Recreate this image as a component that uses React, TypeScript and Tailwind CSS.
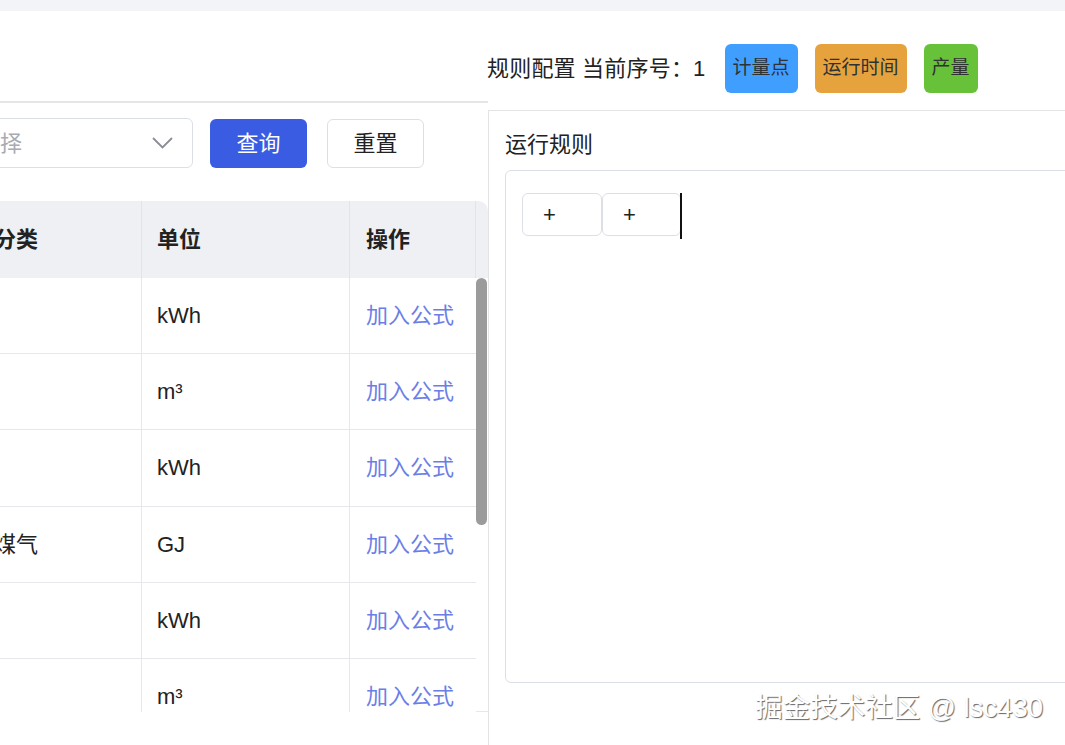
import React from 'react'

interface Row {
  category: string
  unit: string
}

const rows: Row[] = [
  { category: '电', unit: 'kWh' },
  { category: '水', unit: 'm³' },
  { category: '电', unit: 'kWh' },
  { category: '焦炉煤气', unit: 'GJ' },
  { category: '电', unit: 'kWh' },
  { category: '水', unit: 'm³' },
]

const font = { fontFamily: '"Liberation Sans", "Noto Sans CJK SC", sans-serif' }

function FilterBar() {
  return (
    <div className="-ml-[59px] flex items-center pt-[15px]">
      <div className="flex h-[50px] w-[252px] shrink-0 items-center justify-between rounded-[6px] border border-[#dcdfe6] pl-[14px] pr-[19px]">
        <span className="text-[22px] text-[#a8abb2]">请选择</span>
        <svg width="21" height="12" viewBox="0 0 21 12" fill="none">
          <path d="M1 1l9.5 9.5L20 1" stroke="#8a8d93" strokeWidth="1.8" />
        </svg>
      </div>
      <button className="ml-[17px] h-[49px] w-[97px] shrink-0 rounded-[6px] bg-[#3a5ce3] text-[22px] text-white">
        查询
      </button>
      <button className="ml-[20px] h-[49px] w-[97px] shrink-0 rounded-[6px] border border-[#dcdfe6] bg-white text-[22px] text-[#222]">
        重置
      </button>
    </div>
  )
}

function DataTable() {
  return (
    <div className="-ml-[65px] mt-[33px] flex flex-col">
      {/* Header */}
      <div className="flex h-[77px] rounded-tr-[10px] bg-[#eef0f3] text-[22px] font-bold text-[#222]">
        <div className="flex w-[207px] shrink-0 items-center border-r border-[#e2e4e8] pl-[15px]">能源分类</div>
        <div className="flex w-[208px] shrink-0 items-center border-r border-[#e2e4e8] pl-[15px]">单位</div>
        <div className="flex w-[126px] shrink-0 items-center border-r border-[#e2e4e8] pl-[16px]">操作</div>
        <div className="w-[12px] shrink-0" />
      </div>

      {/* Body */}
      <div className="flex h-[434px] overflow-hidden">
        <div className="flex w-[541px] shrink-0 flex-col">
          {rows.map((row, i) => (
            <div key={i} className="flex h-[76.2px] shrink-0 border-b border-[#e6e7ea] text-[22px] text-[#222]">
              <div className="flex w-[207px] shrink-0 items-center border-r border-[#e6e7ea] pl-[15px]">{row.category}</div>
              <div className="flex w-[208px] shrink-0 items-center border-r border-[#e6e7ea] pl-[15px]">{row.unit}</div>
              <div className="flex w-[126px] shrink-0 items-center pl-[16px] text-[#6b7ee6]">加入公式</div>
            </div>
          ))}
        </div>
        <div className="flex w-[12px] shrink-0 flex-col justify-between border-b border-[#e6e7ea]">
          <div className="h-[247px] w-[11px] rounded-full bg-[#9b9b9b]" />
        </div>
      </div>
    </div>
  )
}

function RulePanel() {
  return (
    <div className="flex min-w-0 flex-1 flex-col">
      {/* Title + token badges */}
      <div className="-ml-px flex h-[99px] shrink-0 items-start pt-[33px]">
        <div className="flex h-[49px] items-center text-[22px] tracking-[0.2px] text-[#222]">规则配置 当前序号：1</div>
        <span className="ml-[19px] flex h-[49px] items-center rounded-[6px] bg-[#409eff] px-[8px] text-[19px] text-[#303133]">计量点</span>
        <span className="ml-[17px] flex h-[49px] items-center rounded-[6px] bg-[#e6a23c] px-[8px] text-[19px] text-[#303133]">运行时间</span>
        <span className="ml-[17px] flex h-[49px] items-center rounded-[6px] bg-[#67c23a] px-[8px] text-[19px] text-[#303133]">产量</span>
      </div>

      {/* Rule box */}
      <div className="flex flex-1 flex-col border-l border-t border-[#e4e4e6] pl-[16px] pt-[19px]">
        <div className="text-[22px] leading-[30px] text-[#222]">运行规则</div>
        <div className="-mr-[40px] mt-[10px] flex h-[513px] items-start rounded-[6px] border border-[#dcdfe6] pl-[16px] pt-[22px]">
          <div className="flex h-[43px] w-[80px] items-center rounded-[6px] border border-[#dcdfe6] pl-[20px] text-[22px] text-[#222]">+</div>
          <div className="flex h-[43px] w-[79px] items-center rounded-[6px] border border-[#dcdfe6] pl-[20px] text-[22px] text-[#222]">+</div>
          <div className="-ml-px h-[46px] w-[2px] bg-[#111]" />
        </div>
      </div>
    </div>
  )
}

export default function App() {
  return (
    <div className="relative flex h-[745px] w-[1065px] flex-col overflow-hidden bg-white" style={font}>
      <div className="h-[11px] shrink-0 bg-[#f3f4f8]" />
      <div className="flex min-h-0 flex-1">
        {/* Left: filter + table */}
        <div className="flex w-[488px] shrink-0 flex-col overflow-hidden">
          <div className="h-[90px] shrink-0" />
          <div className="h-[2px] shrink-0 bg-[#e6e6e8]" />
          <FilterBar />
          <DataTable />
        </div>
        <RulePanel />
      </div>

      {/* watermark */}
      <div className="absolute bottom-[17px] right-[22px] text-[27.5px] text-white [text-shadow:1px_1px_1px_rgba(0,0,0,0.6)]">
        掘金技术社区 @ lsc430
      </div>
    </div>
  )
}
